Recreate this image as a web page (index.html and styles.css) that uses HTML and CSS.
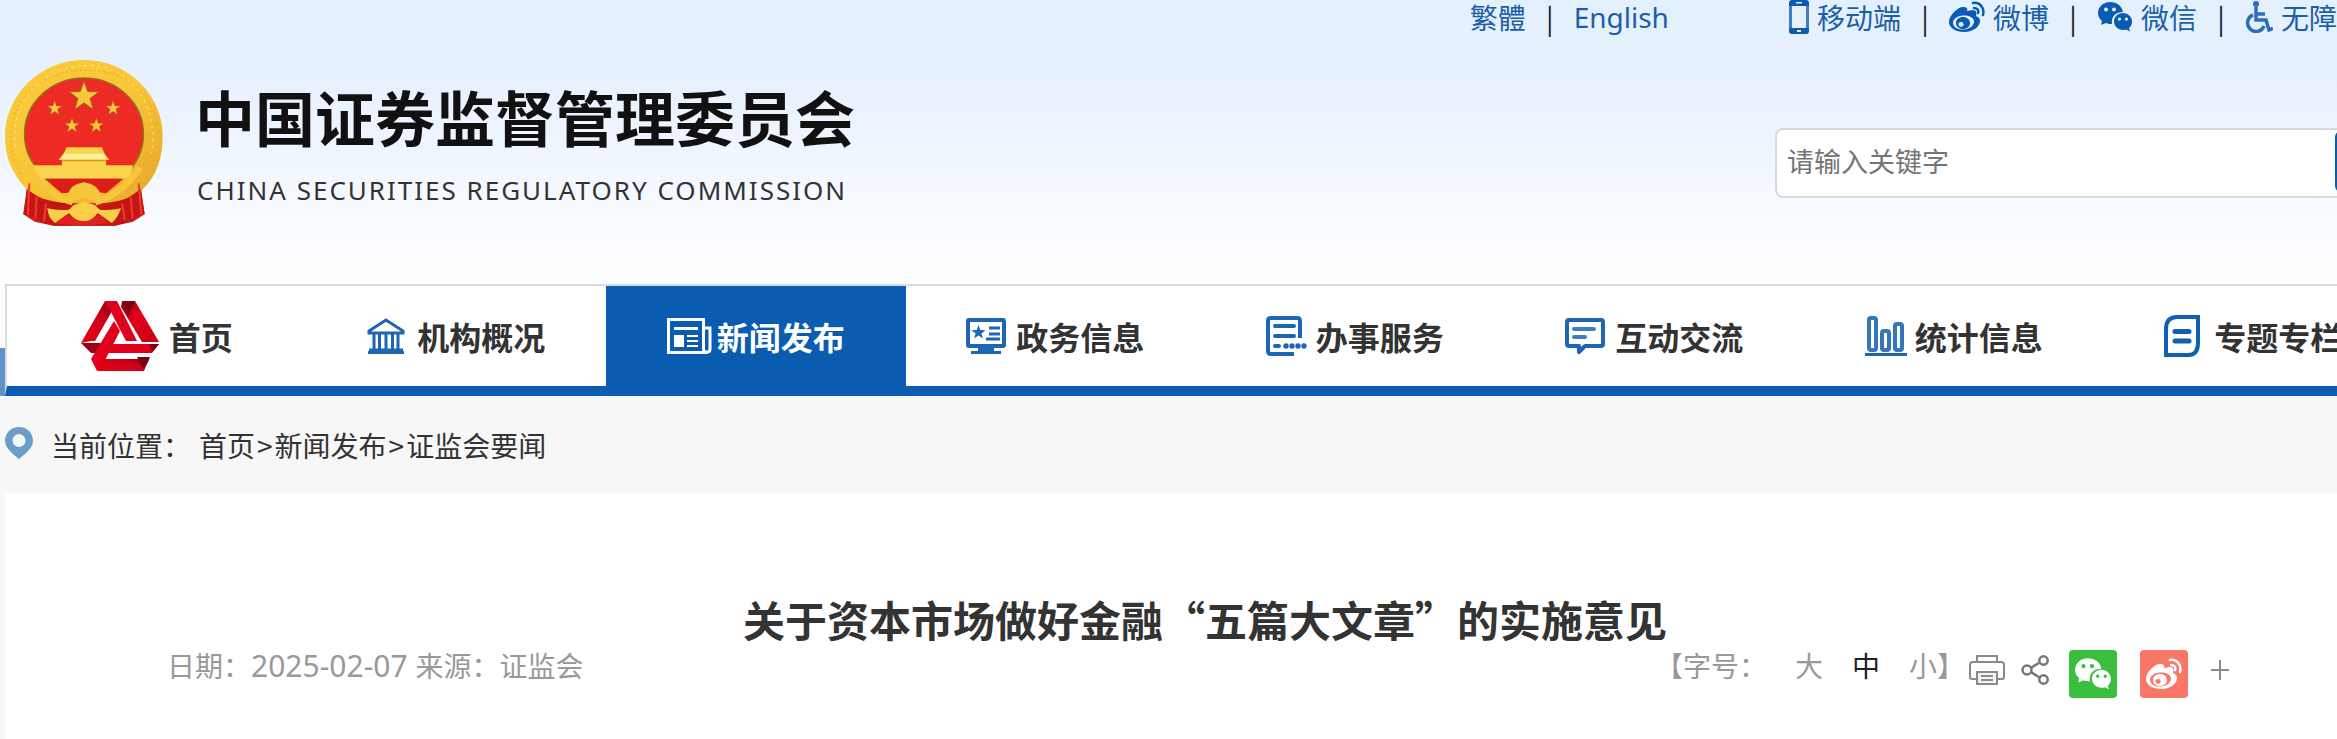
FILE: index.html
```html
<!DOCTYPE html>
<html lang="zh-CN">
<head>
<meta charset="utf-8">
<title>关于资本市场做好金融“五篇大文章”的实施意见</title>
<link rel="stylesheet" href="styles.css">
</head>
<body>

<!-- shared icons -->
<svg class="sprite" aria-hidden="true">
  <symbol id="weibo" viewBox="0 0 36 32">
    <path fill="currentColor" fill-rule="evenodd" d="M14 6C9 6 0 14 0 21c0 6 7 10 15 10 10 0 16-6 16-11 0-3-2-4-4-5 1-3 0-6-3-6-2 0-4 1-6 1 1-2 0-4-4-4zM14 14.500c6-.500 11 2 11 6s-4 7.500-10 8S4 26 4 22s4-7 10-7.500z"/>
    <path fill="currentColor" fill-rule="evenodd" d="M14 16c4 0 7 2.500 7 6s-3 6-7 6-7-2.500-7-6 3-6 7-6zm-2 5a2.600 2.400 0 1 0 .1 4.800A2.600 2.400 0 0 0 12 21z"/>
    <path fill="none" stroke="currentColor" stroke-width="2.500" stroke-linecap="round" d="M24 2c6-1 12 4 10 12M25 7c3 0 5 2 4 5"/>
  </symbol>
  <symbol id="wechat" viewBox="0 0 36 32">
    <path fill="currentColor" fill-rule="evenodd" d="M13 1C6 1 1 6 1 12c0 4 2 6 4 8l-1 4 5-2c2 1 4 1 6 1-1-8 4-12 11-12C25 5 20 1 13 1zM9 6.500a2 2 0 1 1 0 4 2 2 0 0 1 0-4zm8 0a2 2 0 1 1 0 4 2 2 0 0 1 0-4z"/>
    <path fill="currentColor" fill-rule="evenodd" d="M26 12c-5 0-9 4-9 8.500S21 29 26 29c1 0 2 0 3-.5l4 2-1-3.500c2-1.500 3-4 3-6.500 0-4.500-4-8.500-9-8.500zm-3.500 4.500a1.600 1.600 0 1 1 0 3.200 1.600 1.600 0 0 1 0-3.200zm7 0a1.600 1.600 0 1 1 0 3.200 1.600 1.600 0 0 1 0-3.200z"/>
  </symbol>
  <symbol id="star" viewBox="-10 -10 20 20">
    <path d="M0-10 2.400-3.200 9.500-3.100 3.800 1.200 5.900 8.100 0 4-5.900 8.100-3.800 1.200-9.500-3.100-2.400-3.200z"/>
  </symbol>
</svg>

<header class="header">
  <div class="wrap">
    <div class="top-bar">
      <div class="lang-links">
        <a href="#">繁體</a><span class="sep">|</span><a href="#" class="english">English</a>
      </div>
      <div class="site-links">
        <a href="#"><svg width="20" height="34" viewBox="0 0 20 34"><rect x="1.500" y="1.500" width="17" height="31" rx="3" fill="none" stroke="#3f7fc0" stroke-width="3"/><path fill="#0a5cb0" d="M3 0h14q3 0 3 3v3H0V3q0-3 3-3zM0 28h20v3q0 3-3 3H3q-3 0-3-3z"/><path fill="#e4f0fc" d="M7 2h6v1.500H7zM8 30h4v2H8z"/></svg>移动端</a><span class="sep">|</span>
        <a href="#"><svg class="deep" width="36" height="32"><use href="#weibo"/></svg>微博</a><span class="sep">|</span>
        <a href="#"><svg class="deep" width="36" height="32"><use href="#wechat"/></svg>微信</a><span class="sep">|</span>
        <a href="#"><svg width="28" height="32" viewBox="0 0 28 32"><g fill="none" stroke="#2a6db8" stroke-width="3.500"><path d="M8 14a8.500 8.500 0 1 0 11 11"/><path d="M11 6v13h10l3 10 4-1.500M12 13h8"/></g><circle cx="11" cy="3" r="3" fill="#2a6db8"/></svg>无障碍</a>
      </div>
    </div>

    <div class="brand-row">
      <a class="brand" href="#">
        <svg class="emblem" width="158" height="166" viewBox="15 60 474 498" role="img" aria-label="国徽">
          <defs>
            <linearGradient id="gold" x1="0" y1="0" x2="1" y2="1"><stop offset="0" stop-color="#fbcb3a"/><stop offset=".5" stop-color="#f8c637"/><stop offset="1" stop-color="#e5a52a"/></linearGradient>
            <linearGradient id="cloth" x1="0" x2="1"><stop offset="0" stop-color="#e32420"/><stop offset=".3" stop-color="#b41413"/><stop offset=".5" stop-color="#e32420"/><stop offset=".8" stop-color="#b41413"/><stop offset="1" stop-color="#e32420"/></linearGradient>
          </defs>
          <path fill="url(#cloth)" d="M88 410 70 523l34 22 56 12h185l54-12 35-22-16-113z"/>
          <path fill="url(#gold)" d="M252 60c130 0 236 104 236 230 0 66-20 120-62 160-40 30-80 36-120 40H200c-60-6-90-18-123-45-42-48-62-92-62-155C15 164 122 60 252 60z"/>
          <path fill="none" stroke="#e9ad2c" stroke-width="4" stroke-dasharray="5 9" d="M62 400C-10 280 50 96 252 90s272 190 190 310"/>
          <path fill="none" stroke="#ffdc60" stroke-width="4" stroke-dasharray="8 12" d="M50 340C20 210 110 84 252 76s228 130 202 264"/>
          <ellipse cx="252" cy="282" rx="178" ry="168" fill="#ee2a24" stroke="#9b6a1c" stroke-width="5"/>
          <g fill="#f6c63c" stroke="#9b6a1c" stroke-width=".6">
            <use href="#star" x="205" y="123" width="94" height="94"/>
            <use href="#star" x="141" y="182" width="46" height="46"/>
            <use href="#star" x="316" y="182" width="46" height="46"/>
            <use href="#star" x="193" y="234" width="46" height="46"/>
            <use href="#star" x="266" y="234" width="46" height="46"/>
          </g>
          <path fill="#fbd54b" d="M200 322h106l6 16 16 22h-10v16h80l-8 40H112l-10-40h84v-16h-10l16-22z"/>
          <path fill="#fff0a8" d="M192 342h120l8 14H184z"/>
          <path fill="#d9981f" d="M184 360h136v4H184z"/>
          <path fill="#dd1d1c" d="M134 416h236l-52 44-22-3-15-25h-58l-16 26-22 2z"/>
          <path fill="#c61614" d="M80 446q90 75 170 45 80 30 172-45l12 77-90 34H160l-90-34z"/>
          <path fill="none" stroke="#f03a30" stroke-width="6" d="M88 430 84 525M110 470l-4 65M138 490l-6 54M416 430l8 95M392 470l6 65M366 490l8 50"/>
          <path fill="none" stroke="#f7c63a" stroke-width="20" d="M84 382c44 66 90 92 134 104M420 382c-44 66-90 92-134 104"/>
          <path fill="#f7c63a" d="M200 465l16-24 18-10 18-4 18 4 18 10 18 24-22 18-32-10-30 10z"/>
          <path fill="#f9cf48" d="M142 505q30 8 65 4l14-14 30-10 34 10 14 14q32 4 64-4-10 30-28 44l-42-30q-20 28-42 24-22 4-44-24l-42 30q-20-14-23-44z"/>
          <path fill="#df2320" d="M204 524q48 38 94 0l28 25-74 9-86-9z"/>
          <path fill="#f9cf48" d="M222 500h62l-6 34-26 10-26-10z"/>
        </svg>
        <span class="brand-text">
          <span class="brand-cn">中国证券监督管理委员会</span>
          <span class="brand-en">CHINA SECURITIES REGULATORY COMMISSION</span>
        </span>
      </a>
      <form class="search">
        <input type="text" aria-label="请输入关键字" placeholder="请输入关键字">
        <button type="submit" aria-label="搜索"></button>
      </form>
    </div>

    <nav class="nav">
      <a href="#">
        <svg width="78" height="70" viewBox="0 0 78 70">
          <defs>
            <linearGradient id="redA" x1="0" y1="1" x2="1" y2="0"><stop offset="0" stop-color="#e60019"/><stop offset=".6" stop-color="#d00018"/><stop offset="1" stop-color="#8a0010"/></linearGradient>
            <linearGradient id="redB" x1="0" y1="0" x2="1" y2="1"><stop offset="0" stop-color="#8a0010"/><stop offset=".4" stop-color="#e60019"/><stop offset="1" stop-color="#c00016"/></linearGradient>
          </defs>
          <path fill="url(#redA)" d="M24 0h8l-2 12-16 28h-4L0 42z"/>
          <path fill="#9c0012" d="M0 42h20l-4 10h-6z"/>
          <path fill="#e0001b" d="M24 0h12l20 40H45L30 11z"/>
          <path fill="url(#redB)" d="M41 0h13l24 41H61L40 6z"/>
          <path fill="#7d0010" d="M41 0h13l-7 14z"/>
          <path fill="#e0001b" d="M33 20l6 10-20 39-3 1-6-12z"/>
          <path fill="#e0001b" d="M32 43h46l-7 9H26z"/>
          <path fill="url(#redA)" d="M23 58h45l-5 12H17z"/>
          <path fill="#7d0010" d="M56 56h13l-2 5-5 7zM68 43h10l-7 8z"/>
        </svg>
        首页
      </a>
      <a href="#">
        <svg width="50" height="40" viewBox="0 0 50 40"><path fill="none" stroke="#1c66b4" stroke-width="3" d="M2 15 19 4l17 11v2H2zM1 36.500h36M2 34h34M7 16v18M12.500 16v18M19 16v18M25.500 16v18M31 16v18"/></svg>
        机构概况
      </a>
      <a href="#" class="active">
        <svg width="50" height="40" viewBox="0 0 50 40"><path fill="none" stroke="#fff" stroke-width="3" d="M1.500 3.500h35v29q0 4 4 4H1.500zM37 12h6v21q0 3-3 3"/><path fill="#fff" d="M7 11h24v3H7zM7 19h10v12H7zM20 19h11v2H20zM20 24h11v2H20zM20 29h11v2H20z"/></svg>
        新闻发布
      </a>
      <a href="#">
        <svg width="50" height="40" viewBox="0 0 50 40"><rect x="2" y="4" width="36" height="26" rx="1" fill="#fff" stroke="#1c66b4" stroke-width="4"/><path fill="#1c66b4" d="M12 30h16v5h7v3H5v-3h7z"/><use href="#star" x="5" y="9" width="15" height="15" fill="#1c66b4"/><path stroke="#1c66b4" stroke-width="3" d="M23 12h11M23 18h11M20 23h14"/></svg>
        政务信息
      </a>
      <a href="#">
        <svg width="50" height="40" viewBox="0 0 50 40"><g fill="none" stroke="#1c66b4" stroke-width="4"><path d="M34 22V5q0-3-3-3H5Q2 2 2 5v30q0 3 3 3h23"/><path stroke-linecap="round" d="M9 10h19M9 20h19M9 30h4"/></g><g fill="#1c66b4"><circle cx="20" cy="30" r="2.700"/><circle cx="26" cy="30" r="2.700"/><circle cx="32" cy="30" r="2.700"/><circle cx="38" cy="30" r="2.700"/></g></svg>
        办事服务
      </a>
      <a href="#">
        <svg width="50" height="40" viewBox="0 0 50 40"><path fill="none" stroke="#1c66b4" stroke-width="4" stroke-linejoin="round" d="M4 4h32q2 0 2 2v22q0 2-2 2H20l-6 6v-6H4q-2 0-2-2V6q0-2 2-2z"/><path stroke="#3f7fc0" stroke-width="4" stroke-linecap="round" d="M9 13h20M9 21h11"/></svg>
        互动交流
      </a>
      <a href="#">
        <svg width="50" height="42" viewBox="0 0 50 42"><g fill="none" stroke="#3576bb" stroke-width="4"><rect x="4" y="3" width="7" height="32" rx="2"/><rect x="17" y="16" width="7" height="19" rx="2"/><rect x="30" y="9" width="7" height="26" rx="2"/></g><path fill="#1c66b4" d="M0 38h42v3H0z"/></svg>
        统计信息
      </a>
      <a href="#">
        <svg width="50" height="42" viewBox="0 0 50 42"><path fill="none" stroke="#0f5fb2" stroke-width="4" d="M13 2h21v26q0 12-10 12H2V14Q2 2 13 2z"/><path stroke="#0f5fb2" stroke-width="5" stroke-linecap="round" d="M11 16.500h14M11 26h14"/></svg>
        专题专栏
      </a>
    </nav>
  </div>
</header>

<main class="main">
  <div class="wrap">
    <div class="crumbs">
      <svg class="pin" width="28" height="32" viewBox="0 0 28 32"><path fill="#6a9dc8" fill-rule="evenodd" d="M14 0c8 0 14 6 14 14 0 7-8 13-14 18C8 27 0 21 0 14 0 6 6 0 14 0zm0 7a6.500 6.500 0 1 0 0 13 6.500 6.500 0 0 0 0-13z"/></svg>
      <span class="crumbs-label">当前位置：</span>
      <a href="#">首页</a><span class="gt">&gt;</span><a href="#">新闻发布</a><span class="gt">&gt;</span><a href="#">证监会要闻</a>
    </div>

    <article class="article">
      <h1>关于资本市场做好金融“五篇大文章”的实施意见</h1>
      <div class="meta">
        <p>日期：<span class="date">2025-02-07 </span>来源：证监会</p>
        <div class="tools">
          <span>【字号：</span>
          <div class="sizes">
            <button type="button">大</button>
            <button type="button" class="on">中</button>
            <button type="button">小</button>
          </div>
          <span>】</span>
          <button type="button" class="tool print" aria-label="打印"><svg width="36" height="30" viewBox="0 0 36 30"><g fill="none" stroke="#8a8a8a" stroke-width="2"><path d="M8 8V1h20v7M8 24H3q-2 0-2-2V10q0-3 3-3h28q3 0 3 3v12q0 2-2 2h-5"/><path fill="#f4f4f4" d="M8 17h20v12H8zM12 21h12M12 25h12"/></g></svg></button>
          <button type="button" class="tool share" aria-label="分享"><svg width="28" height="30" viewBox="0 0 28 30"><g fill="none" stroke="#777" stroke-width="2.500"><circle cx="6" cy="15" r="4.500"/><circle cx="22.500" cy="5.500" r="4.200"/><circle cx="22.500" cy="24.500" r="4.200"/><path d="m10 13 8.500-5.500M10 17l8.500 5.500"/></g></svg></button>
          <a href="#" class="badge green" aria-label="微信"><svg width="38" height="34"><use href="#wechat"/></svg></a>
          <a href="#" class="badge red" aria-label="微博"><svg width="36" height="32"><use href="#weibo"/></svg></a>
          <button type="button" class="tool more" aria-label="更多"><svg width="18" height="22" viewBox="0 0 18 22"><path stroke="#8a8a8a" stroke-width="2" d="M0 11h18M9 1v20"/></svg></button>
        </div>
      </div>
    </article>
  </div>
</main>

</body>
</html>
```
FILE: styles.css
```css
* {
    box-sizing: border-box;
}
body {
    margin: 0;
    background: #f7f7f7;
    color: #333;
    font-family: "Noto Sans CJK SC", sans-serif;
    font-size: 28px;
    line-height: 36px;
    overflow-x: hidden;
}
a {
    color: inherit;
    text-decoration: none;
}
button {
    font: inherit;
    color: inherit;
    padding: 0;
    border: 0;
    background: none;
    cursor: pointer;
}
svg {
    display: block;
    flex: none;
}
.sprite {
    position: absolute;
    width: 0;
    height: 0;
}
.english,
.date,
.brand-en {
    font-family: "Noto Sans", sans-serif;
}
.date {
    font-size: 30px;
    white-space: pre;
}

/* the site is wider than small windows, the rest is cut off */
.wrap {
    min-width: 2400px;
    margin-left: 5px;
}

/* header */
.header {
    position: relative;
    background: linear-gradient(#e3f0fd 0, #e8f1fd 90px, #f4f9ff 190px, #fcfdff 250px, #fcfdff);
}
.header::before {
    content: "";
    position: absolute;
    left: 0;
    bottom: 0;
    width: 5px;
    height: 48px;
    background: #5f92c8;
}
.top-bar {
    display: flex;
    justify-content: flex-end;
    gap: 120px;
    padding-right: 40px;
    line-height: 34px;
    color: #1c5fa8;
}
.lang-links,
.site-links {
    display: flex;
}
.top-bar a {
    display: flex;
    align-items: center;
    gap: 8px;
}
.sep {
    width: 48px;
    text-align: center;
    color: #222;
}
.deep {
    color: #0a5cb0;
}
.brand-row {
    display: flex;
    justify-content: space-between;
    align-items: flex-start;
    padding: 26px 0 58px;
}
.brand {
    display: flex;
    gap: 32px;
    color: #111;
}
.brand-text {
    display: flex;
    flex-direction: column;
    padding-top: 14px;
}
.brand-cn {
    font-size: 60px;
    font-weight: bold;
    line-height: 84px;
}
.brand-en {
    margin-top: 14px;
    padding-left: 2px;
    font-size: 26px;
    letter-spacing: 2px;
    color: #333;
}
.search {
    display: flex;
    width: 630px;
    height: 70px;
    margin-top: 68px;
    border: 2px solid #d9d9d9;
    border-radius: 8px;
    background: #fff;
}
.search input {
    flex: 1;
    min-width: 0;
    padding: 0 0 4px 10px;
    border: 0;
    outline: 0;
    background: none;
    font: inherit;
    font-size: 27px;
}
.search input::placeholder {
    color: #757575;
    opacity: 1;
}
.search button {
    width: 68px;
    margin: 1px 0 4px;
    border-radius: 6px;
    background: #0a5cb0;
}

/* main menu */
.nav {
    display: grid;
    grid-template-columns: repeat(8, 1fr);
    border: 2px solid #d9dcdf;
    border-bottom: 10px solid #0a5cb0;
    background: #fff;
}
.nav a {
    display: flex;
    align-items: center;
    justify-content: center;
    height: 100px;
    font-size: 32px;
    font-weight: bold;
}
.nav a:first-child {
    gap: 10px;
}
.nav .active {
    background: #0a5cb0;
    color: #fff;
}

/* breadcrumb */
.crumbs {
    display: flex;
    align-items: center;
    height: 97px;
}
.pin {
    margin-bottom: 4px;
}
.crumbs-label {
    margin: 0 8px 0 18px;
}
.gt {
    padding: 0 2px;
}

/* article */
.article {
    min-height: 260px;
    padding: 98px 162px 40px;
    background: #fff;
}
.article h1 {
    margin: 0;
    font-size: 42px;
    line-height: 56px;
    text-align: center;
}
.meta {
    display: flex;
    justify-content: space-between;
    align-items: flex-start;
    color: #999;
}
.meta p {
    margin: 0;
}
.tools {
    display: flex;
    align-items: flex-start;
}
.sizes {
    display: flex;
    gap: 29px;
    margin-left: 28px;
}
.sizes .on {
    color: #222;
}
.tool {
    display: flex;
    align-items: center;
    height: 46px;
}
.print {
    margin-left: 4px;
}
.share {
    margin-left: 16px;
}
.badge {
    display: flex;
    align-items: center;
    justify-content: center;
    width: 48px;
    height: 48px;
    margin-top: 3px;
    margin-left: 20px;
    border-radius: 4px;
    color: #fff;
}
.red {
    margin-left: 23px;
}
.green {
    background: #3abe3e;
}
.red {
    background: #f87766;
}
.more {
    margin: 0 14px 0 23px;
}
```
